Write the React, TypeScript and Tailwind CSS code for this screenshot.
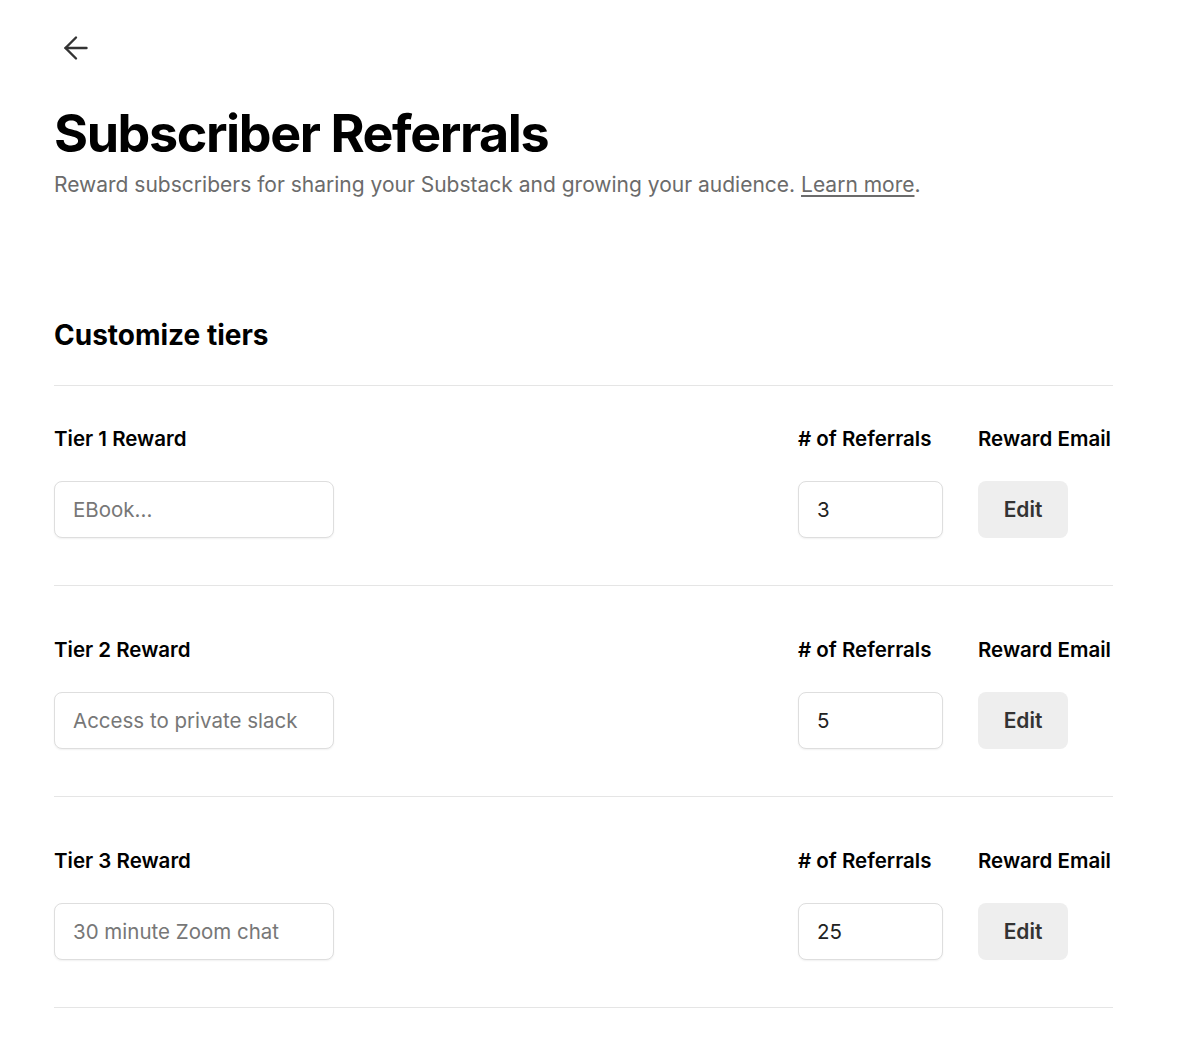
import { ArrowLeft } from "lucide-react";

const tiers = [
  { label: "Tier 1 Reward", placeholder: "EBook...", referrals: "3" },
  { label: "Tier 2 Reward", placeholder: "Access to private slack", referrals: "5" },
  { label: "Tier 3 Reward", placeholder: "30 minute Zoom chat", referrals: "25" },
];

function TierRow({ label, placeholder, referrals, first }: { label: string; placeholder: string; referrals: string; first: boolean }) {
  return (
    <div className={`flex justify-between border-b border-[#e5e5e5] pb-[47px] ${first ? "pt-[41px]" : "pt-[52px]"}`}>
      <div className="flex flex-col gap-[30px]">
        <span className="text-[20.5px] font-semibold leading-6 text-black">{label}</span>
        <input
          placeholder={placeholder}
          className="h-[57px] w-[280px] rounded-lg border border-[#dedede] bg-white px-[18px] text-[20.5px] text-[#222] shadow-[0_1px_2px_rgba(0,0,0,0.06)] outline-none placeholder:text-[#777]"
        />
      </div>
      <div className="flex gap-[35px]">
        <div className="flex w-[145px] flex-col gap-[30px]">
          <span className="whitespace-nowrap text-[20.5px] font-semibold leading-6 text-black">
            # of Referrals
          </span>
          <input
            defaultValue={referrals}
            className="h-[57px] w-[145px] rounded-lg border border-[#dedede] bg-white px-[18px] text-[20.5px] text-[#222] shadow-[0_1px_2px_rgba(0,0,0,0.06)] outline-none"
          />
        </div>
        <div className="flex w-[135px] flex-col gap-[30px]">
          <span className="whitespace-nowrap text-[20.5px] font-semibold leading-6 text-black">Reward Email</span>
          <button className="h-[57px] w-[90px] rounded-lg bg-[#eeeeee] text-[21px] font-semibold text-[#333]">
            Edit
          </button>
        </div>
      </div>
    </div>
  );
}

export default function App() {
  return (
    <div className="min-h-screen bg-white font-['Inter',_'Noto_Sans',_sans-serif] text-black">
      <div className="w-[1113px] pl-[54px] pt-[30px]">
        <button className="ml-[4px] block text-[#333]">
          <ArrowLeft size={36} strokeWidth={1.6} />
        </button>
        <h1 className="mt-[36px] text-[52px] font-bold leading-[64px] tracking-[-1.4px]">Subscriber Referrals</h1>
        <p className="mt-[5px] text-[21px] leading-7 text-[#6b6b6b]">
          Reward subscribers for sharing your Substack and growing your audience.{" "}
          <a className="underline underline-offset-[3px]">Learn more</a>.
        </p>
        <h2 className="mt-[118px] border-b border-[#e5e5e5] pb-[32px] text-[28px] font-bold leading-9">
          Customize tiers
        </h2>
        {tiers.map((t, i) => (
          <TierRow key={t.label} {...t} first={i === 0} />
        ))}
      </div>
    </div>
  );
}
